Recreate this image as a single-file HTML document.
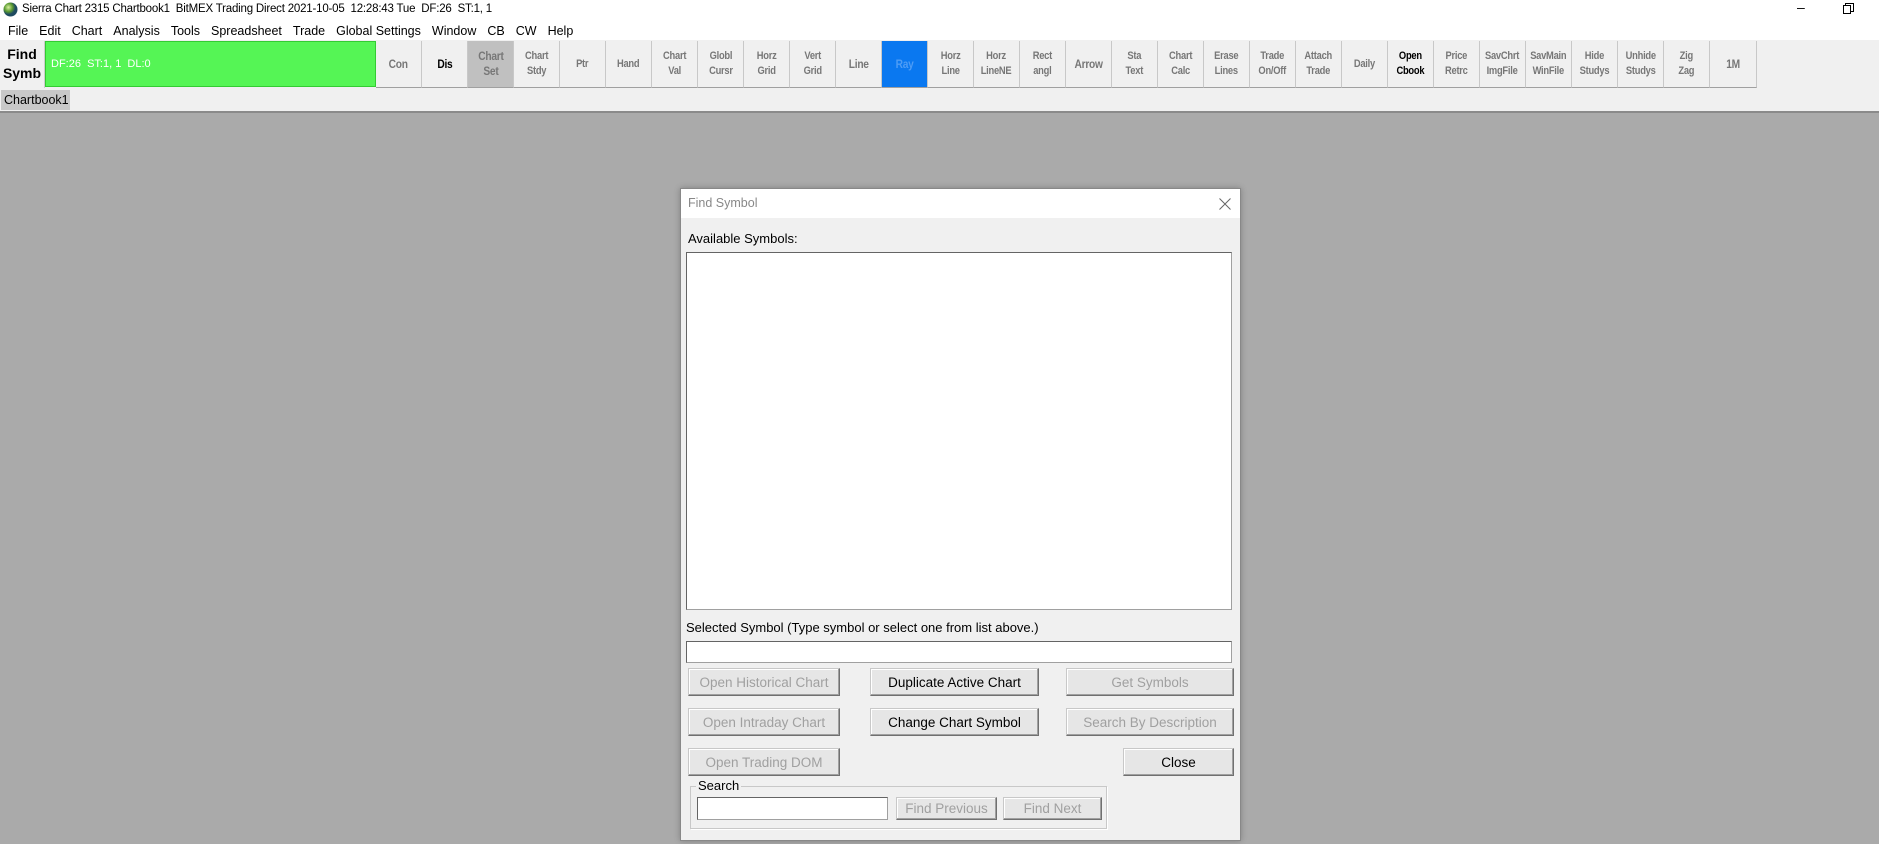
<!DOCTYPE html>
<html><head><meta charset="utf-8"><style>
*{box-sizing:border-box;margin:0;padding:0}
body{width:1879px;height:844px;overflow:hidden;background:#fff;font-family:"Liberation Sans",sans-serif;position:relative}
.abs{position:absolute}
#title{left:0;top:0;width:1879px;height:21px;background:#fff;font-size:12.5px;line-height:19px;color:#000}
#menu{left:0;top:21px;width:1879px;height:20px;background:#fff;font-size:12.5px;line-height:20px}
#menu span{margin-left:8px;margin-right:3px}
#tb{left:0;top:40px;width:1879px;height:49px;background:#f0f0f0}
.b{position:absolute;top:41px;height:47px;width:46px;border-right:1px solid #c8c8c8;border-bottom:1px solid #a0a0a0;background:#f0f0f0;display:flex;align-items:center;justify-content:center;text-align:center;font-size:11px;line-height:15px;color:#777;font-weight:bold;letter-spacing:-0.3px}
.b span{display:inline-block;transform:scaleX(0.85)}
.d{color:#000}
#tabs{left:0;top:89px;width:1879px;height:24px;background:#f0f0f0;border-bottom:2px solid #8a8a8a}
#grey{left:0;top:113px;width:1879px;height:731px;background:#aaaaaa}
#dlg{left:680px;top:188px;width:561px;height:653px;background:#f0f0f0;border:1px solid #888;box-shadow:0 0 6px rgba(0,0,0,.25)}
.btn{position:absolute;background:#e6e6e6;border:1px solid #c8c8c8;border-right-color:#707070;border-bottom-color:#707070;box-shadow:inset -1px -1px #a0a0a0, inset 1px 1px #fff;font-size:13.5px;display:flex;align-items:center;justify-content:center;color:#a0a0a0}
.btn.on{color:#000}
.inp{position:absolute;background:#fff;border:1px solid #a0a0a0;border-top-color:#646464;border-left-color:#646464}
.lbl{position:absolute;font-size:13px;color:#000}
</style></head><body>
<div id="title" class="abs"><svg style="position:absolute;left:3px;top:2px" width="15" height="15"><defs><radialGradient id="g" cx="0.35" cy="0.35"><stop offset="0" stop-color="#d8f0a0"/><stop offset="0.6" stop-color="#5a9a30"/><stop offset="1" stop-color="#1e4a60"/></radialGradient></defs><circle cx="7.5" cy="7.5" r="7" fill="url(#g)"/></svg><span style="position:absolute;left:22px;font-size:11.5px;letter-spacing:-0.2px">Sierra Chart 2315 Chartbook1&nbsp; BitMEX Trading Direct 2021-10-05&nbsp; 12:28:43 Tue&nbsp; DF:26&nbsp; ST:1, 1</span>
<span style="position:absolute;left:1797px;top:-2px;font-size:14px">–</span>
<svg style="position:absolute;left:1843px;top:3px" width="11" height="11"><rect x="0.5" y="2.5" width="7" height="8" fill="none" stroke="#000"/><path d="M2.5 2.5V0.5H10.5V8.5H7.5" fill="none" stroke="#000"/></svg></div>
<div id="menu" class="abs"><span>File</span><span>Edit</span><span>Chart</span><span>Analysis</span><span>Tools</span><span>Spreadsheet</span><span>Trade</span><span>Global Settings</span><span>Window</span><span>CB</span><span>CW</span><span>Help</span></div>
<div id="tb" class="abs"></div>
<div class="abs" style="left:0;top:41px;width:45px;height:47px;background:#f0f0f0;font-size:14px;font-weight:bold;text-align:center;line-height:19px;padding-top:4px;border-right:1px solid #ccc">Find<br>Symb</div>
<div class="abs" style="left:45px;top:41px;width:331px;height:46px;background:#55f555;border:1px solid #3c3;color:#fff;font-size:11px;line-height:44px;padding-left:5px">DF:26&nbsp; ST:1, 1&nbsp; DL:0</div>
<div class="b" style="left:376px;font-size:12px"><span>Con</span></div>
<div class="b d" style="left:422px;font-size:12px"><span>Dis</span></div>
<div class="b" style="left:468px;background:#c0c0c0;font-size:12px"><span>Chart<br>Set</span></div>
<div class="b" style="left:514px"><span>Chart<br>Stdy</span></div>
<div class="b" style="left:560px"><span>Ptr</span></div>
<div class="b" style="left:606px"><span>Hand</span></div>
<div class="b" style="left:652px"><span>Chart<br>Val</span></div>
<div class="b" style="left:698px"><span>Globl<br>Cursr</span></div>
<div class="b" style="left:744px"><span>Horz<br>Grid</span></div>
<div class="b" style="left:790px"><span>Vert<br>Grid</span></div>
<div class="b" style="left:836px;font-size:12px"><span>Line</span></div>
<div class="b" style="left:882px;background:#0a78f0;color:#4d9cf5;font-size:12px"><span>Ray</span></div>
<div class="b" style="left:928px"><span>Horz<br>Line</span></div>
<div class="b" style="left:974px"><span>Horz<br>LineNE</span></div>
<div class="b" style="left:1020px"><span>Rect<br>angl</span></div>
<div class="b" style="left:1066px;font-size:12px"><span>Arrow</span></div>
<div class="b" style="left:1112px"><span>Sta<br>Text</span></div>
<div class="b" style="left:1158px"><span>Chart<br>Calc</span></div>
<div class="b" style="left:1204px"><span>Erase<br>Lines</span></div>
<div class="b" style="left:1250px"><span>Trade<br>On/Off</span></div>
<div class="b" style="left:1296px"><span>Attach<br>Trade</span></div>
<div class="b" style="left:1342px"><span>Daily</span></div>
<div class="b d" style="left:1388px"><span>Open<br>Cbook</span></div>
<div class="b" style="left:1434px"><span>Price<br>Retrc</span></div>
<div class="b" style="left:1480px"><span>SavChrt<br>ImgFile</span></div>
<div class="b" style="left:1526px"><span>SavMain<br>WinFile</span></div>
<div class="b" style="left:1572px"><span>Hide<br>Studys</span></div>
<div class="b" style="left:1618px"><span>Unhide<br>Studys</span></div>
<div class="b" style="left:1664px"><span>Zig<br>Zag</span></div>
<div class="b" style="left:1710px;width:47px;font-size:12px"><span>1M</span></div>
<div id="tabs" class="abs"><div style="position:absolute;left:1px;top:1px;width:69px;height:20px;background:#c8c8c8;font-size:12.5px;line-height:20px;padding-left:3px">Chartbook1</div></div>
<div id="grey" class="abs"></div>
<div id="dlg" class="abs">
<div style="position:absolute;left:0;top:0;width:559px;height:29px;background:#fff;font-size:12.5px;color:#888;line-height:28px;padding-left:7px">Find Symbol</div>
<svg style="position:absolute;left:538px;top:9px" width="12" height="12"><path d="M0.5 0.5L11.5 11.5M11.5 0.5L0.5 11.5" stroke="#666" stroke-width="1"/></svg>
<div class="lbl" style="left:7px;top:42px">Available Symbols:</div>
<div class="inp" style="left:5px;top:63px;width:546px;height:358px"></div>
<div class="lbl" style="left:5px;top:431px">Selected Symbol (Type symbol or select one from list above.)</div>
<div class="inp" style="left:5px;top:452px;width:546px;height:22px"></div>
<div class="btn" style="left:7px;top:479px;width:152px;height:28px">Open Historical Chart</div>
<div class="btn on" style="left:189px;top:479px;width:169px;height:28px">Duplicate Active Chart</div>
<div class="btn" style="left:385px;top:479px;width:168px;height:28px">Get Symbols</div>
<div class="btn" style="left:7px;top:519px;width:152px;height:28px">Open Intraday Chart</div>
<div class="btn on" style="left:189px;top:519px;width:169px;height:28px">Change Chart Symbol</div>
<div class="btn" style="left:385px;top:519px;width:168px;height:28px">Search By Description</div>
<div class="btn" style="left:7px;top:559px;width:152px;height:28px">Open Trading DOM</div>
<div class="btn on" style="left:442px;top:559px;width:111px;height:28px">Close</div>
<div style="position:absolute;left:9px;top:597px;width:417px;height:43px;border:1px solid #c8c8c8;box-shadow:1px 1px #fff"></div>
<div class="lbl" style="left:15px;top:589px;background:#f0f0f0;padding:0 2px">Search</div>
<div class="inp" style="left:16px;top:608px;width:191px;height:23px"></div>
<div class="btn" style="left:215px;top:608px;width:101px;height:23px">Find Previous</div>
<div class="btn" style="left:322px;top:608px;width:99px;height:23px">Find Next</div>
</div>
</body></html>
